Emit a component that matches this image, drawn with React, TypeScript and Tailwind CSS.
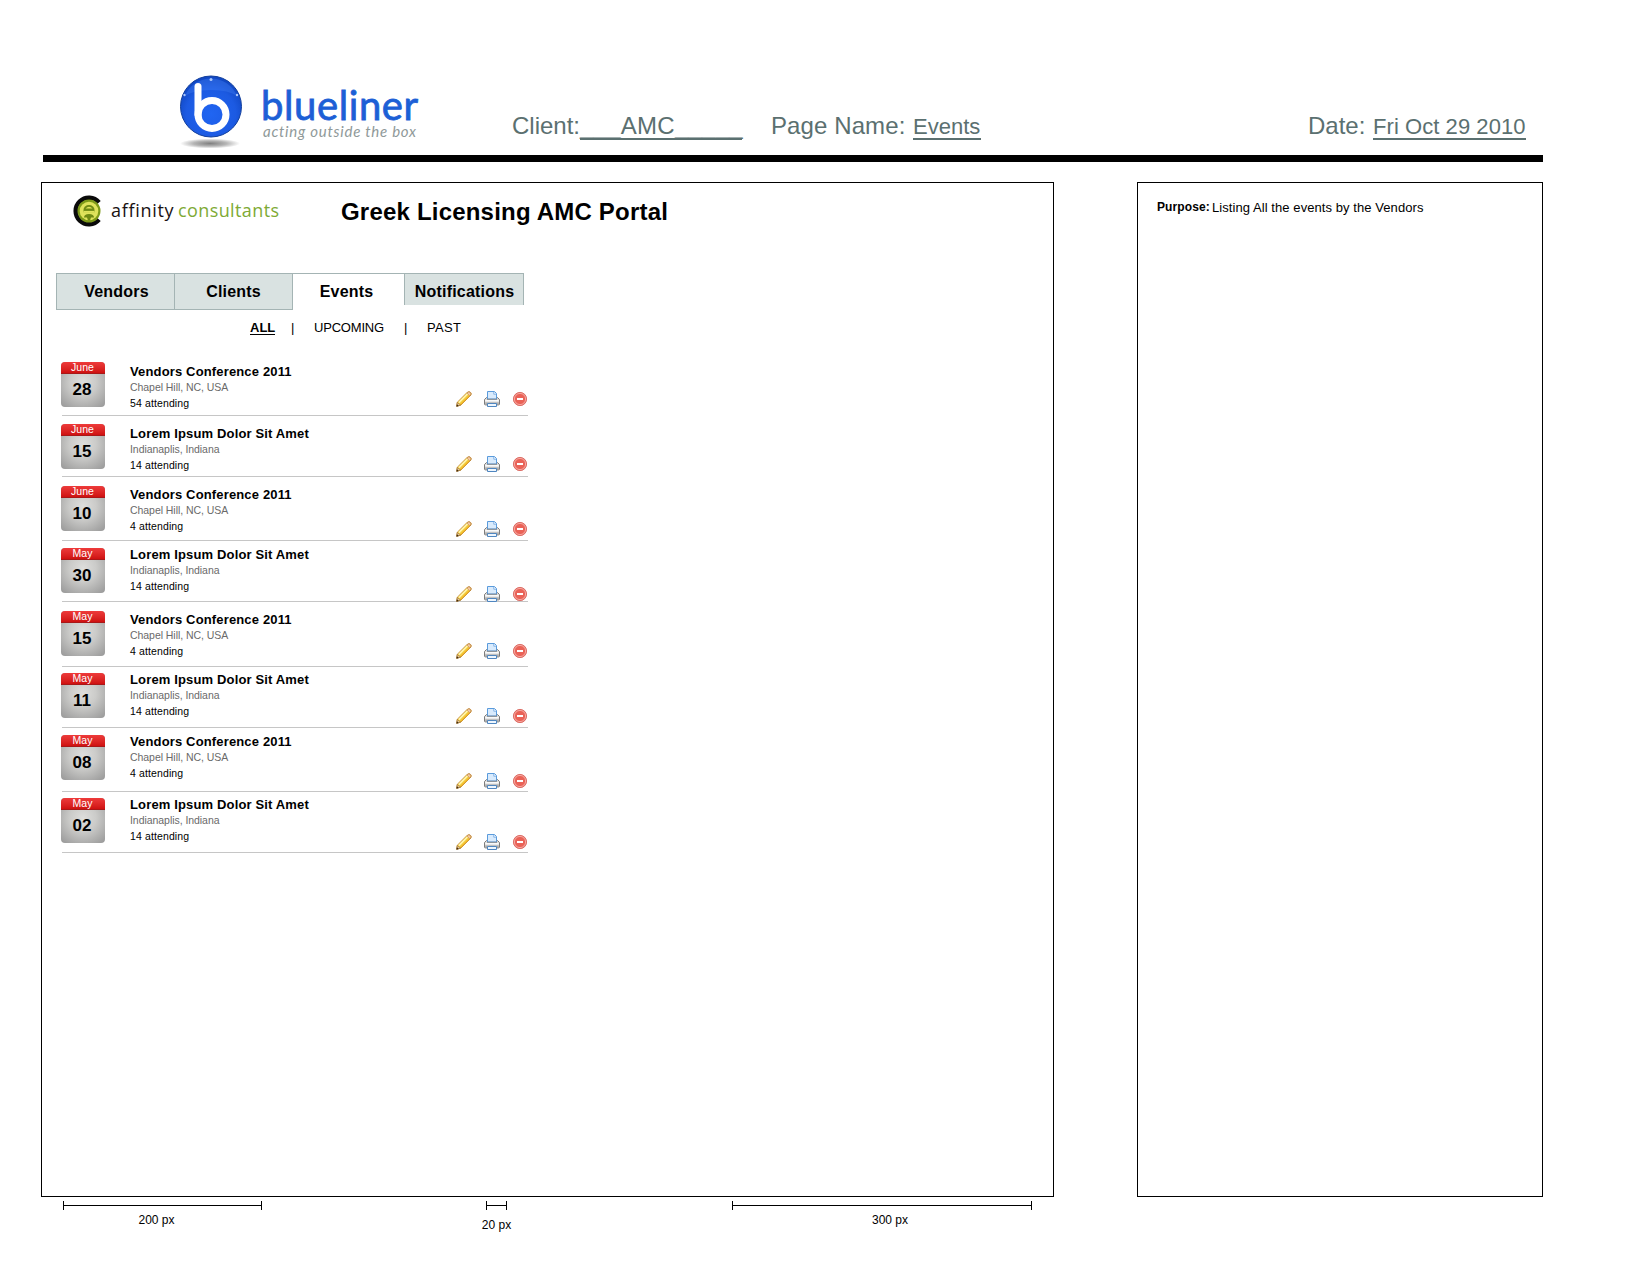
import React from 'react';

type EventRow = {
  month: string;
  day: string;
  title: string;
  place: string;
  attending: string;
  rowClass: string;
  dateClass: string;
  textClass: string;
  iconClass: string;
};

const conference = { title: 'Vendors Conference 2011', place: 'Chapel Hill, NC, USA' };
const lorem = { title: 'Lorem Ipsum Dolor Sit Amet', place: 'Indianaplis, Indiana' };

const events: EventRow[] = [
  { ...conference, month: 'June', day: '28', attending: '54 attending', rowClass: 'h-[61px]', dateClass: 'mt-[7px]', textClass: 'mt-[9px]', iconClass: 'mt-9' },
  { ...lorem, month: 'June', day: '15', attending: '14 attending', rowClass: 'h-[61px]', dateClass: 'mt-2', textClass: 'mt-2.5', iconClass: 'mt-10' },
  { ...conference, month: 'June', day: '10', attending: '4 attending', rowClass: 'h-16', dateClass: 'mt-[9px]', textClass: 'mt-2.5', iconClass: 'mt-11' },
  { ...lorem, month: 'May', day: '30', attending: '14 attending', rowClass: 'h-[61px]', dateClass: 'mt-[7px]', textClass: 'mt-1.5', iconClass: 'mt-[45px]' },
  { ...conference, month: 'May', day: '15', attending: '4 attending', rowClass: 'h-[65px]', dateClass: 'mt-[9px]', textClass: 'mt-2.5', iconClass: 'mt-[41px]' },
  { ...lorem, month: 'May', day: '11', attending: '14 attending', rowClass: 'h-[61px]', dateClass: 'mt-1.5', textClass: 'mt-[5px]', iconClass: 'mt-[41px]' },
  { ...conference, month: 'May', day: '08', attending: '4 attending', rowClass: 'h-16', dateClass: 'mt-[7px]', textClass: 'mt-1.5', iconClass: 'mt-[45px]' },
  { ...lorem, month: 'May', day: '02', attending: '14 attending', rowClass: 'h-[61px]', dateClass: 'mt-1.5', textClass: 'mt-[5px]', iconClass: 'mt-[42px]' },
];

function BluelinerMark() {
  return (
    <svg width="68" height="78" viewBox="177 72 68 78" className="shrink-0">
      <defs>
        <radialGradient id="ball" cx="50%" cy="62%" r="58%">
          <stop offset="0" stopColor="#2065f2" />
          <stop offset="0.7" stopColor="#1c5ae2" />
          <stop offset="1" stopColor="#1148c4" />
        </radialGradient>
        <radialGradient id="ballShadow">
          <stop offset="0" stopColor="#7f7f7f" />
          <stop offset="0.55" stopColor="#b5b5b5" />
          <stop offset="1" stopColor="#ffffff" />
        </radialGradient>
      </defs>
      <ellipse cx="210" cy="143.5" rx="30" ry="5" fill="url(#ballShadow)" />
      <circle cx="211" cy="106.5" r="30.5" fill="url(#ball)" stroke="#123f9c" strokeWidth="1" />
      <path d="M185 96a28 28 0 0 1 52 0q-8-6-26-6t-26 6z" fill="#3f7df5" opacity="0.4" />
      <path d="M198 86.500V114.500" stroke="#fff" strokeWidth="7" strokeLinecap="round" />
      <circle cx="212" cy="114.500" r="14" fill="none" stroke="#fff" strokeWidth="7" />
      <circle cx="211" cy="79.500" r="1.500" fill="#a9c6fb" />
      <circle cx="184.500" cy="95" r="1.200" fill="#a9c6fb" />
      <circle cx="237" cy="95" r="1.200" fill="#a9c6fb" />
    </svg>
  );
}

function AffinityMark() {
  return (
    <svg width="32" height="32" viewBox="73.500 195 32 32" className="shrink-0">
      <path d="M100.500 202.500A13.200 13.200 0 1 0 100.500 219.500" fill="none" stroke="#0a0a0a" strokeWidth="4.500" />
      <circle cx="90.500" cy="211" r="11.500" fill="#7d9a18" />
      <circle cx="90.500" cy="211" r="9.300" fill="#dfe35b" />
      <path d="M85 212.300V210a5.500 5 0 0 1 11 0v2.300z" fill="#6f8a14" />
      <path d="M87 208.500q3.500-3.500 7 0z" fill="#dfe35b" />
      <path d="M85 211.800h11" stroke="#dfe35b" strokeWidth="1.800" />
      <path d="M85.500 217.500q0-3.500 5-3.500t5 3.500l-3 0-1 3h-2l-1-3z" fill="#6f8a14" />
    </svg>
  );
}

function PencilIcon() {
  return (
    <svg width="16" height="16" viewBox="0 0 16 16">
      <path d="M1.200 11.400 10.800 1.800 12.300.8 14 .9 15.200 2.200 15 4 5 14 .7 15.300z" fill="#f6cf3d" stroke="#bd832a" strokeWidth="0.900" />
      <path d="M2.800 11.600 11.600 2.800" stroke="#fff6b0" strokeWidth="1.600" />
      <path d="M4.700 13.300 13.500 4.500" stroke="#eeb32c" strokeWidth="1.200" />
      <path d="M11 2.200 12.400 1 14.200 1.300 14.900 3 13.800 4.800z" fill="#f5c9a2" stroke="#c08a5a" strokeWidth="0.600" />
      <path d="M1.300 11.600 4.700 14 .8 15.300z" fill="#eccf9e" stroke="#8a5a1c" strokeWidth="0.500" />
      <path d="M.4 15.600 1 13.300 2.800 14.900z" fill="#3a2a12" />
    </svg>
  );
}

function PrinterIcon() {
  return (
    <svg width="16" height="16" viewBox="0 0 16 16">
      <path d="M2.500 6.500h11l2 2v4.500q0 .9-.9.900H1.400q-.9 0-.9-.9V8.500z" fill="#d8d8d8" stroke="#7c7c7c" />
      <path d="M3.500 8V.5H10.500L12.500 2.500V8z" fill="#d9ebfd" stroke="#5a9bdc" />
      <path d="M9.800 1V3.200h2.400" fill="#fff" stroke="#5a9bdc" strokeWidth="0.700" />
      <path d="M3 8.300h10" stroke="#777" strokeWidth="0.900" />
      <path d="M1.200 9.700h13.600" stroke="#fafafa" strokeWidth="1.600" />
      <path d="M1.200 12.200h13.600" stroke="#a9a9a9" strokeWidth="1.400" />
      <path d="M3.500 12.500h9v3h-9z" fill="#eef6fe" stroke="#4f86c0" />
    </svg>
  );
}

function DeleteIcon() {
  return (
    <svg width="16" height="16" viewBox="0 0 16 16">
      <circle cx="8" cy="8" r="6.600" fill="#ea6257" stroke="#dc6f68" strokeWidth="1" />
      <circle cx="8" cy="8" r="5.600" fill="none" stroke="#f6b0a8" strokeWidth="0.900" />
      <rect x="5" y="7" width="6" height="2" fill="#fff" />
    </svg>
  );
}

function DateBadge({ month, day }: { month: string; day: string }) {
  return (
    <div className="h-[45px] w-[44px] overflow-hidden rounded-[4px] bg-[radial-gradient(circle_at_50%_45%,#dededc_0%,#cbcbc9_40%,#979797_100%)] text-center">
      <div className="h-3 border-b border-[#a81818] bg-linear-to-b from-[#ee3a3a] to-[#cf1010] pr-px text-[10.5px] leading-[10px] text-white">
        {month}
      </div>
      <div className="pr-0.5 text-[17px] leading-[31px] font-bold">{day}</div>
    </div>
  );
}

function Ruler({ className }: { className: string }) {
  return (
    <div className={`flex h-[9px] items-center border-x border-black ${className}`}>
      <div className="h-px w-full bg-black" />
    </div>
  );
}

export default function App() {
  return (
    <div className="h-[1274px] w-[1650px] overflow-hidden bg-white font-['Liberation_Sans',Arial,sans-serif] text-black">
      <header className="ml-[43px] flex h-[162px] w-[1500px] items-start border-b-[7px] border-black text-2xl whitespace-nowrap text-[#5b7070]">
        <div className="mt-[72px] ml-[134px] flex w-[335px]">
          <BluelinerMark />
          <div className="mt-[9px] ml-4">
            <div className="h-11 font-[Lato,sans-serif] text-[40px] leading-[48px] tracking-[0.6px] text-[#1c5fd6] [-webkit-text-stroke:0.8px_#1c5fd6]">
              blueliner
            </div>
            <div className="ml-0.5 font-[Lato,sans-serif] text-[15px] leading-3 tracking-[0.75px] text-[#8f9999] italic">
              acting outside the box
            </div>
          </div>
        </div>
        <div className="mt-28 flex leading-[27px]">
          <div className="w-[68px]">Client:</div>
          <div className="h-7 w-[162px] border-b-2 border-[#5b7070] tracking-[0.25px]">___AMC_____</div>
          <div className="ml-[29px] w-[142px] tracking-[0.1px]">Page Name:</div>
          <div className="h-7 w-[68px] border-b-2 border-[#5b7070] text-[22px] leading-[29px]">Events</div>
        </div>
        <div className="mt-28 mr-[17px] ml-auto flex leading-[27px]">
          <div className="w-[65px]">Date:</div>
          <div className="h-7 w-[153px] border-b-2 border-[#5b7070] text-[22px] leading-[29px] tracking-[0.06px]">Fri Oct 29 2010</div>
        </div>
      </header>

      <div className="mt-5 ml-[41px] flex">
        <main className="h-[1015px] w-[1013px] border border-black">
          <div className="flex h-[90px] items-start pt-3 pl-[30px] whitespace-nowrap">
            <AffinityMark />
            <div className="ml-[7px] flex w-[230px] font-['Open_Sans',sans-serif] text-[18px] leading-[30px]">
              <span className="w-[67px] tracking-[0.7px] text-[#1a1212]">affinity</span>
              <span className="tracking-[0.4px] text-[#7eaa35]">consultants</span>
            </div>
            <h1 className="mt-[3px] text-2xl leading-[27px] font-bold tracking-[0.2px]">Greek Licensing AMC Portal</h1>
          </div>

          <nav className="ml-3.5 flex text-center text-base leading-[35px] font-bold tracking-[0.2px]">
            <div className="h-[37px] w-[119px] border border-[#a4b4b4] bg-[#d9e2e1] pl-0.5">Vendors</div>
            <div className="h-[37px] w-[118px] border border-l-0 border-[#a4b4b4] bg-[#d9e2e1]">Clients</div>
            <div className="h-[37px] w-[111px] border-t border-[#a4b4b4] pr-1">Events</div>
            <div className="h-8 w-[120px] border border-b-0 border-[#a4b4b4] bg-[#d9e2e1] pl-px">Notifications</div>
          </nav>

          <div className="mt-2.5 flex h-[17px] pl-[208px] text-[13px] leading-[15px]">
            <div className="mr-4 h-[15px] w-[25px] border-b border-black font-bold">ALL</div>
            <div className="w-[23px]">|</div>
            <div className="w-[90px] tracking-[-0.2px]">UPCOMING</div>
            <div className="w-[23px]">|</div>
            <div className="tracking-[0.3px]">PAST</div>
          </div>

          <div className="mt-[18px] ml-5 w-[466px]">
            {events.map((e, i) => (
              <div key={i} className={`flex items-start border-b border-[#c6c6c6] whitespace-nowrap ${e.rowClass}`}>
                <div className={`-ml-px ${e.dateClass}`}>
                  <DateBadge month={e.month} day={e.day} />
                </div>
                <div className={`ml-[25px] w-[326px] ${e.textClass}`}>
                  <div className="text-[13px] leading-4 font-bold tracking-[0.15px]">{e.title}</div>
                  <div className="text-[10.5px] leading-[15px] tracking-[-0.05px] text-[#6a6a6a]">{e.place}</div>
                  <div className="text-[10.5px] leading-4 tracking-[0.12px]">{e.attending}</div>
                </div>
                <div className={`flex gap-3 ${e.iconClass}`}>
                  <PencilIcon />
                  <PrinterIcon />
                  <DeleteIcon />
                </div>
              </div>
            ))}
          </div>
        </main>

        <aside className="ml-[83px] h-[1015px] w-[406px] border border-black pt-4 pl-[19px]">
          <div className="flex">
            <div className="w-[55px] text-xs leading-[17px] font-bold tracking-[0.1px]">Purpose:</div>
            <div className="text-[13px] leading-[18px] tracking-[0.07px]">Listing All the events by the Vendors</div>
          </div>
        </aside>
      </div>

      <footer className="mt-1 ml-[63px] flex items-start text-center text-xs leading-[17px]">
        <div className="w-[199px]">
          <Ruler className="w-[199px]" />
          <div className="mt-0.5 pr-3">200 px</div>
        </div>
        <div className="ml-[217px] w-[35px]">
          <Ruler className="mx-[7px] w-[21px]" />
          <div className="mt-[7px] whitespace-nowrap">20 px</div>
        </div>
        <div className="ml-[218px] w-[300px]">
          <Ruler className="w-[300px]" />
          <div className="mt-0.5 pl-4">300 px</div>
        </div>
      </footer>
    </div>
  );
}
